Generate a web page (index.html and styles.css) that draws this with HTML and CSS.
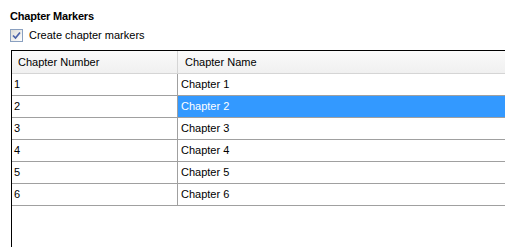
FILE: index.html
```html
<!DOCTYPE html>
<html>
<head>
<meta charset="utf-8">
<link rel="stylesheet" href="styles.css">
</head>
<body>
<div class="page">
  <div class="title">Chapter Markers</div>
  <label class="check">
    <span class="box"><svg width="9" height="9" viewBox="0 0 9 9"><path d="M1 4.5 L3.5 7 L8 1.5" fill="none" stroke="#4a62a8" stroke-width="1.7"/></svg></span>
    <span>Create chapter markers</span>
  </label>
  <div class="table">
    <div class="row head">
      <div class="c1">Chapter Number</div>
      <div class="c2">Chapter Name</div>
    </div>
    <div class="row"><div class="c1">1</div><div class="c2">Chapter 1</div></div>
    <div class="row"><div class="c1">2</div><div class="c2 sel">Chapter 2</div></div>
    <div class="row"><div class="c1">3</div><div class="c2">Chapter 3</div></div>
    <div class="row"><div class="c1">4</div><div class="c2">Chapter 4</div></div>
    <div class="row"><div class="c1">5</div><div class="c2">Chapter 5</div></div>
    <div class="row"><div class="c1">6</div><div class="c2">Chapter 6</div></div>
  </div>
</div>
</body>
</html>
```
FILE: styles.css
```css
html, body {
  margin: 0;
  padding: 0;
  background: #fff;
  overflow: hidden;
}
body {
  font-family: "Liberation Sans", Arial, sans-serif;
  font-size: 11px;
  color: #000;
}
.page {
  width: 505px;
  height: 247px;
  display: flex;
  flex-direction: column;
}
.title {
  font-weight: bold;
  margin: 9px 0 0 10px;
  height: 14px;
  line-height: 14px;
  letter-spacing: -0.2px;
}
.check {
  display: flex;
  align-items: center;
  gap: 6px;
  margin: 5px 0 0 10px;
  height: 14px;
}
.box {
  width: 11px;
  height: 11px;
  border: 1px solid #8aa0c0;
  background: linear-gradient(135deg, #dcdcd7, #fff);
  display: flex;
  align-items: center;
  justify-content: center;
}
.table {
  margin: 8px 0 0 11px;
  flex: 1;
  border-left: 1px solid #000;
  border-top: 1px solid #000;
}
.row {
  display: flex;
  height: 21px;
  border-bottom: 1px solid #a0a0a0;
  line-height: 21px;
}
.head {
  height: 22px;
  line-height: 22px;
  background: linear-gradient(#fafafa, #f0f0f0);
  border-bottom: 1px solid #d5d5d5;
}
.c1 {
  width: 163px;
  border-right: 1px solid #a0a0a0;
  padding-left: 2px;
}
.c2 {
  flex: 1;
  padding-left: 3px;
}
.head .c1 { padding-left: 6px; width: 159px; border-right-color: #d5d5d5; }
.head .c2 { padding-left: 7px; }
.sel {
  background: #3399ff;
  color: #fff;
}
```
